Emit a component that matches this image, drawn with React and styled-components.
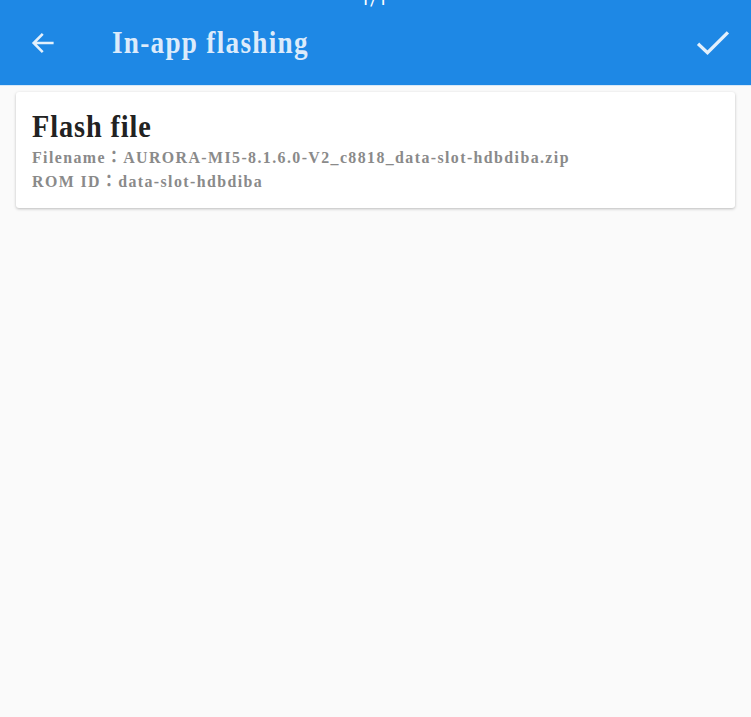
import React from "react";
import styled, { createGlobalStyle } from "styled-components";

const Global = createGlobalStyle`
  html, body {
    margin: 0;
    padding: 0;
    background: #fafafa;
  }
  body {
    font-family: "Liberation Serif", "Noto Sans CJK JP", serif;
  }
`;

const Page = styled.div`
  width: 751px;
  height: 717px;
  background: #fafafa;
  overflow: hidden;
`;

const Toolbar = styled.header`
  position: relative;
  height: 86px;
  background: #1e88e5;
  display: flex;
  align-items: center;
  padding: 0 16px 0 28px;
  box-sizing: border-box;
  border-bottom: 1px solid #d6e8f8;
`;

const Pager = styled.span`
  position: absolute;
  top: -12px;
  left: 360px;
  font-size: 18px;
  color: #ffffff;
  font-family: "Roboto", sans-serif;
`;

const IconBtn = styled.button`
  border: 0;
  background: none;
  padding: 0;
  display: flex;
  align-items: center;
  justify-content: center;
  width: ${(p) => p.$w}px;
  height: 40px;
  color: #e3f0fc;
`;

const TitleWrap = styled.div`
  flex: 1;
  margin-left: 54px;
`;

const Squeezed = styled.span`
  display: inline-block;
  white-space: nowrap;
  transform: scaleX(${(p) => p.$k});
  transform-origin: left center;
`;

const Title = styled(Squeezed)`
  font-size: 32px;
  font-weight: bold;
  letter-spacing: 1.5px;
  color: #dcebfb;
`;

const List = styled.main`
  padding: 6px 16px;
`;

const Card = styled.section`
  background: #ffffff;
  border-radius: 3px;
  box-shadow: 0 1px 3px rgba(0, 0, 0, 0.25);
  padding: 17px 16px 16px;
  height: 116px;
  box-sizing: border-box;
`;

const CardTitle = styled(Squeezed)`
  display: block;
  margin: 0 0 3px;
  font-size: 32px;
  line-height: 34px;
  font-weight: bold;
  letter-spacing: 1px;
  color: #222222;
`;

const Meta = styled(Squeezed)`
  display: block;
  font-size: 17px;
  line-height: 24px;
  font-weight: bold;
  color: #8a8a8a;
  letter-spacing: 1.5px;
`;

export default function App() {
  return (
    <Page>
      <Global />
      <Toolbar>
        <Pager>1/1</Pager>
        <IconBtn $w={30}>
          <svg width="28" height="28" viewBox="0 0 24 24" fill="none" stroke="currentColor" strokeWidth="2.2" strokeLinecap="square">
            <path d="M20 12H5M11 5l-7 7 7 7" />
          </svg>
        </IconBtn>
        <TitleWrap>
          <Title $k={0.85}>In-app flashing</Title>
        </TitleWrap>
        <IconBtn $w={44}>
          <svg width="44" height="44" viewBox="0 0 24 24" fill="none" stroke="currentColor" strokeWidth="1.8" strokeLinecap="square">
            <path d="M4.5 13l4.5 4.3L19.5 6.8" />
          </svg>
        </IconBtn>
      </Toolbar>
      <List>
        <Card>
          <CardTitle $k={0.885}>Flash file</CardTitle>
          <Meta $k={0.935}>Filename：AURORA-MI5-8.1.6.0-V2_c8818_data-slot-hdbdiba.zip</Meta>
          <Meta $k={0.935}>ROM ID：data-slot-hdbdiba</Meta>
        </Card>
      </List>
    </Page>
  );
}
